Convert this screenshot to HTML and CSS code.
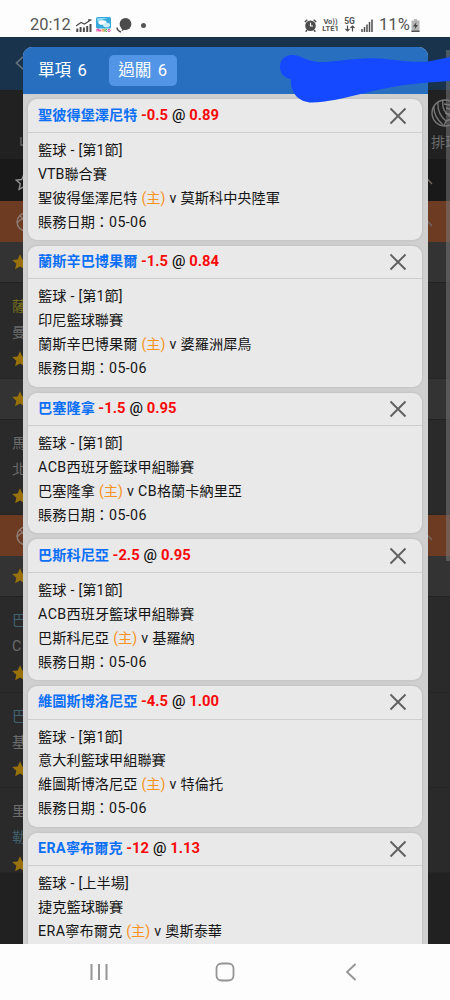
FILE: index.html
```html
<!DOCTYPE html>
<html lang="zh-Hant">
<head>
<meta charset="utf-8">
<title>注單</title>
<link rel="stylesheet" href="styles.css">
</head>
<body>
<svg class="defs" aria-hidden="true">
  <symbol id="x" viewBox="0 0 18 18"><path d="M1.500 1.500 16.500 16.500M16.500 1.500 1.500 16.500" fill="none" stroke="#606060" stroke-width="1.900"/></symbol>
  <symbol id="star" viewBox="0 0 16 16"><path d="M8 .3 10.300 5.400 15.800 6 11.700 9.700 12.900 15.200 8 12.400 3.100 15.200 4.300 9.700 .2 6 5.700 5.400Z" fill="#98710a"/></symbol>
  <symbol id="ball" viewBox="0 0 20 20"><g fill="none" stroke="#8f7d74" stroke-width="1.400"><circle cx="10" cy="10" r="9"/><path d="M4 4Q10 8 9 19M1 11Q7 4 17 5M7 2Q15 8 17 15"/></g></symbol>
  <symbol id="up" viewBox="0 0 16 10"><path d="M1 9 8 1.500 15 9" fill="none" stroke="#746c66" stroke-width="1.300"/></symbol>
</svg>
<div class="phone">
  <header class="status">
    <span class="clock">20:12</span>
    <svg class="s-chart" viewBox="0 0 16 13"><path d="M1.300 13V9.500M4.600 13V8M7.900 13V8.500M11.200 13V7M14.500 13V5" stroke="#4c4c4c" stroke-width="2"/><path d="M0 7 5 3.500 8.500 5 15 .8M12 .8H15.500" fill="none" stroke="#4c4c4c" stroke-width="1.200"/></svg>
    <svg class="s-app" viewBox="0 0 15 16"><rect width="15" height="11.500" rx="1.500" fill="#35a9dc"/><path d="M1 1H12Q6 2 2 6Z" fill="#8bd9f6"/><ellipse cx="6.500" cy="5.500" rx="4" ry="2.300" fill="#fff"/><ellipse cx="10.500" cy="8" rx="3.500" ry="2.300" fill="#c9eefa"/><path d="M1 14.500V12.500Q2.500 11 3 14.500Q4 11 5 14.500" fill="none" stroke="#e44b9a" stroke-width="1.200"/><circle cx="7" cy="13.300" r="1" fill="none" stroke="#e98b32"/><path d="M9 11.500V15M11 12 9.500 13.500 11 15" fill="none" stroke="#55ad45"/><circle cx="13" cy="13.500" r="1.100" fill="none" stroke="#d64aa0"/></svg>
    <svg class="s-chat" viewBox="0 0 16 15"><circle cx="9.500" cy="6" r="5.900" fill="#4c4c4c"/><path d="M7 9 5.500 13 11 11Z" fill="#4c4c4c"/><path d="M1 9.500Q1 12.500 5 14" fill="none" stroke="#4c4c4c" stroke-width="1.500"/></svg>
    <span class="dot"></span>
    <svg class="s-alarm" viewBox="0 0 13 13"><circle cx="6.500" cy="6.800" r="5.300" fill="#4c4c4c"/><path d="M.8 3 3.300 .8M9.700 .8 12.200 3M3 11 1.700 12.700M10 11 11.300 12.700" stroke="#4c4c4c" stroke-width="1.500"/><path d="M6.500 3.700V7H9" fill="none" stroke="#fff" stroke-width="1.200"/></svg>
    <span class="net lte"><span>Vo))</span><span>LTE1</span></span>
    <span class="net five"><span>5G</span><svg viewBox="0 0 10 7"><path d="M2.500 .5V6M.5 4 2.500 6 4.500 4M7.500 6.500V1M5.500 3 7.500 1 9.500 3" fill="none" stroke="#4c4c4c" stroke-width="1.200"/></svg></span>
    <svg class="s-signal" viewBox="0 0 12 13"><path d="M1 13V10M3.500 13V8M6 13V5.500M8.500 13V3M11 13V.5" stroke="#4c4c4c" stroke-width="1.500"/></svg>
    <span class="pct">11%</span>
    <svg class="s-batt" viewBox="0 0 9 13"><path d="M3 0H6V1.500H8.500V13H.5V1.500H3Z" fill="#b5b5b5"/><path d="M.5 11.500H8.500V13H.5Z" fill="#555"/><path d="M5.500 3 2 7.500H4.300L3.500 10.500 7 6H4.800Z" fill="#444"/></svg>
  </header>

  <main class="app">
    <div class="page">
      <div class="topbar"><svg class="back" viewBox="0 0 10 16"><path d="M9 1 1.500 8 9 15" fill="none" stroke="#63717c" stroke-width="1.700"/></svg></div>
      <div class="sports">
        <svg class="prev" viewBox="0 0 9 9"><path d="M1 0V8H8V0" fill="none" stroke="#696969" stroke-width="1.300"/></svg>
        <div class="sport">
          <svg viewBox="0 0 28 28"><g fill="none" stroke="#777" stroke-width="1.400"><circle cx="14" cy="14" r="13"/><path d="M7 3Q6 15 15 22M12 1Q10 12 20 18M3 7Q2 17 12 26M15 22Q21 20 26 17M15 9 27 12M13 5 25 7M14 14 26 17M15 22 13 27"/></g></svg>
          <span>排球</span>
        </div>
      </div>
      <div class="fav"><svg class="outline" viewBox="0 0 18 18"><path d="M9 1.500 11.300 6.500 16.800 7.100 12.700 10.800 13.900 16.300 9 13.500 4.100 16.300 5.300 10.800 1.200 7.100 6.700 6.500Z" fill="none" stroke="#8d8d8d" stroke-width="1.500"/></svg><svg class="chev"><use href="#up"/></svg></div>
      <div class="league"><svg class="ball"><use href="#ball"/></svg><svg class="chev"><use href="#up"/></svg></div>
      <div class="sub"><svg class="star"><use href="#star"/></svg></div>
      <div class="game"><span class="hot">薩</span><span>曼</span><svg class="star"><use href="#star"/></svg></div>
      <div class="sub"><svg class="star"><use href="#star"/></svg></div>
      <div class="game"><span>馬</span><span>北</span><svg class="star"><use href="#star"/></svg></div>
      <div class="league"><svg class="ball"><use href="#ball"/></svg><svg class="chev"><use href="#up"/></svg></div>
      <div class="sub"><svg class="star"><use href="#star"/></svg></div>
      <div class="game"><span class="fave">巴</span><span>C</span><svg class="star"><use href="#star"/></svg></div>
      <div class="game"><span class="fave">巴</span><span>基</span><svg class="star"><use href="#star"/></svg></div>
      <div class="game last"><span>里</span><span class="fave">勒</span><svg class="star"><use href="#star"/></svg></div>
    </div>
    <div class="scrollbar"></div>

    <section class="modal">
      <div class="tabs"><span class="tab">單項 6</span><span class="tab active">過關 6</span></div>
      <div class="cards">
        <article class="card">
          <div class="head"><p><b class="team">聖彼得堡澤尼特</b> <b class="num">-0.5</b> <i>@</i> <b class="num">0.89</b></p><svg class="close"><use href="#x"/></svg></div>
          <div class="body"><p>籃球 - [第1節]</p><p>VTB聯合賽</p><p>聖彼得堡澤尼特 <em>(主)</em> v 莫斯科中央陸軍</p><p>賬務日期：<span class="date">05-06</span></p></div>
        </article>
        <article class="card">
          <div class="head"><p><b class="team">蘭斯辛巴博果爾</b> <b class="num">-1.5</b> <i>@</i> <b class="num">0.84</b></p><svg class="close"><use href="#x"/></svg></div>
          <div class="body"><p>籃球 - [第1節]</p><p>印尼籃球聯賽</p><p>蘭斯辛巴博果爾 <em>(主)</em> v 婆羅洲犀鳥</p><p>賬務日期：<span class="date">05-06</span></p></div>
        </article>
        <article class="card">
          <div class="head"><p><b class="team">巴塞隆拿</b> <b class="num">-1.5</b> <i>@</i> <b class="num">0.95</b></p><svg class="close"><use href="#x"/></svg></div>
          <div class="body"><p>籃球 - [第1節]</p><p><span class="latin">ACB</span>西班牙籃球甲組聯賽</p><p>巴塞隆拿 <em>(主)</em> v <span class="latin">CB</span>格蘭卡納里亞</p><p>賬務日期：<span class="date">05-06</span></p></div>
        </article>
        <article class="card">
          <div class="head"><p><b class="team">巴斯科尼亞</b> <b class="num">-2.5</b> <i>@</i> <b class="num">0.95</b></p><svg class="close"><use href="#x"/></svg></div>
          <div class="body"><p>籃球 - [第1節]</p><p><span class="latin">ACB</span>西班牙籃球甲組聯賽</p><p>巴斯科尼亞 <em>(主)</em> v 基羅納</p><p>賬務日期：<span class="date">05-06</span></p></div>
        </article>
        <article class="card">
          <div class="head"><p><b class="team">維圖斯博洛尼亞</b> <b class="num">-4.5</b> <i>@</i> <b class="num">1.00</b></p><svg class="close"><use href="#x"/></svg></div>
          <div class="body"><p>籃球 - [第1節]</p><p>意大利籃球甲組聯賽</p><p>維圖斯博洛尼亞 <em>(主)</em> v 特倫托</p><p>賬務日期：<span class="date">05-06</span></p></div>
        </article>
        <article class="card">
          <div class="head"><p><b class="team"><span class="latin">ERA</span>寧布爾克</b> <b class="num">-12</b> <i>@</i> <b class="num">1.13</b></p><svg class="close"><use href="#x"/></svg></div>
          <div class="body"><p>籃球 - [上半場]</p><p>捷克籃球聯賽</p><p><span class="latin">ERA</span>寧布爾克 <em>(主)</em> v 奧斯泰華</p></div>
        </article>
      </div>
    </section>
    <svg class="scribble" viewBox="275 50 175 58"><path d="M291 55C299 54 303 60 318 62C335 62 350 58.500 371 58.200C390 58 405 63 428 61.500L450 57V81L428 82.500C400 85 385 88 365 93C345 98 325 102.500 312 102.500C300 102.500 290 94 291 79C284 78 280 73 280 67C280 60 284 56 291 55Z" fill="#1449ff"/></svg>
  </main>

  <nav class="nav">
    <svg viewBox="0 0 20 20"><path d="M2.500 2V18M10 2V18M17.500 2V18" stroke="#949494" stroke-width="2"/></svg>
    <svg viewBox="0 0 20 20"><rect x="1.500" y="1.500" width="17" height="17" rx="5" fill="none" stroke="#949494" stroke-width="1.800"/></svg>
    <svg viewBox="0 0 20 20"><path d="M14.500 2 6 10 14.500 18" fill="none" stroke="#949494" stroke-width="1.800"/></svg>
  </nav>
</div>
</body>
</html>
```

FILE: styles.css
```css
* { box-sizing: border-box; }
body { margin: 0; font-family: Roboto, "Noto Sans CJK TC", sans-serif; }
p { margin: 0; white-space: nowrap; }
svg { display: block; flex: none; }
.defs { position: absolute; width: 0; height: 0; }
.phone { width: 450px; height: 1000px; display: flex; flex-direction: column; overflow: hidden; background: #fdfdfd; }

.status { height: 37px; flex: none; display: flex; align-items: center; padding: 13px 0 0 30px; color: #555; }
.clock { width: 46px; font-size: 16.4px; line-height: 20px; }
.s-chart { width: 16px; height: 13px; }
.s-app { width: 15px; height: 16px; margin-left: 4px; }
.s-chat { width: 16px; height: 15px; margin-left: 5px; }
.dot { width: 5px; height: 5px; margin-left: 9px; border-radius: 50%; background: #555; }
.s-alarm { width: 13px; height: 13px; margin-left: 158px; }
.net { display: flex; flex-direction: column; align-items: center; font-size: 7.5px; line-height: 7px; font-weight: 700; }
.lte { width: 17px; margin-left: 5px; }
.five { width: 11px; margin-left: 5px; font-size: 8.5px; }
.five svg { width: 10px; height: 7px; }
.s-signal { width: 12px; height: 13px; margin-left: 6px; }
.pct { width: 31px; margin-left: 6px; font-size: 16.6px; line-height: 20px; }
.s-batt { width: 9px; height: 13px; margin-left: 1px; }

.app { flex: 1; position: relative; overflow: hidden; background: #212121; }
.page { display: flex; flex-direction: column; font-size: 14.2px; color: #6c6c6c; }
.topbar { height: 53px; padding: 18px 0 0 15px; background: #19334c; }
.back { width: 10px; height: 16px; }
.sports { height: 69px; display: flex; justify-content: space-between; padding: 9px 0 0 20px; background: #212121; }
.prev { width: 9px; height: 9px; margin-top: 38px; }
.sport { width: 19px; display: flex; flex-direction: column; gap: 5px; line-height: 20px; white-space: nowrap; }
.sport svg { width: 28px; height: 28px; }
.fav, .league, .sub { display: flex; align-items: center; justify-content: space-between; }
.fav { height: 42px; padding: 0 17px 0 15px; background: #191919; }
.outline { width: 18px; height: 18px; margin-top: 4px; }
.chev { width: 16px; height: 10px; }
.league { height: 41px; padding: 0 17px 0 16px; background: #6d3a22; }
.ball { width: 20px; height: 20px; }
.sub { height: 41px; padding-left: 12px; background: #333; border-bottom: 1px solid #222; }
.star { width: 16px; height: 16px; }
.game { height: 95px; display: flex; flex-direction: column; padding: 10px 0 0 12px; line-height: 26px; background: #2a2a2a; border-bottom: 1px solid #252525; }
.game .star { margin-top: 6px; }
.sub + .game { height: 95.5px; }
.last { height: 85px; }
.hot { color: #77701b; }
.fave { color: #42616f; }
.scrollbar { position: absolute; right: 0; top: 13px; width: 4.5px; height: 511px; background: rgba(125, 125, 125, .5); }

.modal { position: absolute; left: 22.7px; top: 10px; width: 404.9px; height: 910px; border-radius: 9px 9px 0 0; overflow: hidden; background: #d0d0d0; }
.tabs { height: 47px; display: flex; align-items: center; gap: 9px; padding-left: 3px; background: #286fc0; color: #fff; font-size: 16.6px; line-height: 32px; word-spacing: 2.3px; }
.tab { height: 31px; width: 74px; padding-left: 12.300px; white-space: nowrap; }
.tab.active { width: 68px; padding-left: 0; text-align: center; border-radius: 5px; background: #5295e6; }
.cards { display: flex; flex-direction: column; gap: 6px; padding: 5.300px 5.700px; }
.card { height: 140.7px; flex: none; border-radius: 9px; background: #e9e9e9; box-shadow: 0 0 3px rgba(0, 0, 0, .12); }
.head { height: 33.500px; display: flex; align-items: center; justify-content: space-between; padding: 0 14.500px 0 9.700px; border-bottom: 1px solid #cecece; font-size: 14.200px; color: #111; }
.head p { line-height: 18px; margin-top: -2px; }
.team { color: #0c70f7; }
.num { color: #f90909; font-size: 14.800px; }
.head i { font-style: normal; font-weight: 500; font-size: 15px; margin: 0 .4px; }
.close { width: 18px; height: 18px; }
.body { padding: 6px 9.700px 0; font-size: 14.200px; line-height: 23.900px; color: #151515; word-spacing: .6px; }
.body em { font-style: normal; color: #f8931f; }
.date, .latin { letter-spacing: .4px; }
.scribble { position: absolute; left: 275px; top: 13px; width: 175px; height: 58px; }

.nav { height: 56.500px; flex: none; display: flex; align-items: center; justify-content: space-between; padding: 1px 89px 0; }
.nav svg { width: 20px; height: 20px; }
```
